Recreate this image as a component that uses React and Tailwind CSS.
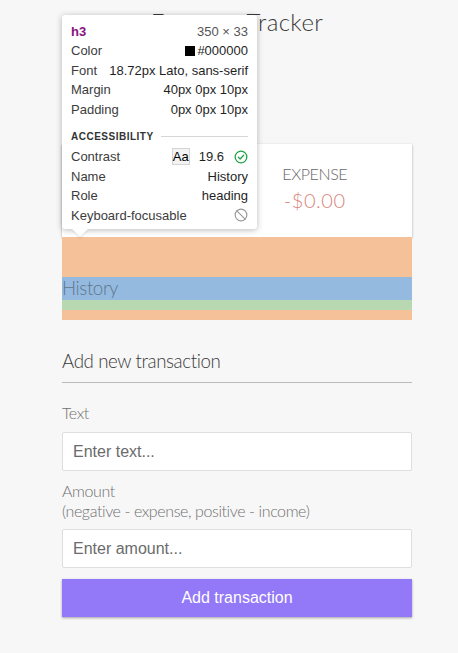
import React from 'react';

const TipRow = ( { label, children, className = '' } ) => (
	<div className={ `flex items-center justify-between h-[19.5px] ${ className }` }>
		<span className="text-[#3c3c3c]">{ label }</span>
		<span className="flex items-center text-[#1f1f1f]">{ children }</span>
	</div>
);

const Inspector = () => (
	<div className="absolute left-[62px] top-[15px] w-[195px] h-[214px] bg-white rounded-[3px] shadow-[0_1px_6px_rgba(0,0,0,0.28)] px-[9px] pt-[6.5px] font-['Liberation_Sans',Arial,sans-serif] font-normal tracking-normal text-[13px]">
		<div className="flex items-center justify-between h-[19.5px]">
			<span className="font-bold text-[#881280]">h3</span>
			<span className="text-[#555]">350 × 33</span>
		</div>
		<TipRow label="Color">
			<span className="w-[10px] h-[10px] bg-black mr-[2px]" />
			#000000
		</TipRow>
		<TipRow label="Font">18.72px Lato, sans-serif</TipRow>
		<TipRow label="Margin">40px 0px 10px</TipRow>
		<TipRow label="Padding">0px 0px 10px</TipRow>
		<div className="flex items-center gap-[7px] h-[14px] mt-[10px] mb-[4px]">
			<span className="text-[10px] font-bold tracking-[0.5px] text-[#333]">ACCESSIBILITY</span>
			<span className="flex-1 h-px bg-[#d6d6d6]" />
		</div>
		<TipRow label="Contrast">
			<span className="inline-flex items-center justify-center w-[18px] h-[17px] border border-[#d4d4d4] bg-[#f3f3f3] text-black text-[13px] mr-[9px]">
				Aa
			</span>
			<span className="mr-[10px]">19.6</span>
			<svg width="14" height="14" viewBox="0 0 24 24" fill="none" stroke="#1ea446" strokeWidth="2.2" strokeLinecap="round" strokeLinejoin="round">
				<circle cx="12" cy="12" r="10" />
				<path d="m7.5 12.5 3 3 6-6.5" />
			</svg>
		</TipRow>
		<TipRow label="Name">History</TipRow>
		<TipRow label="Role">heading</TipRow>
		<TipRow label="Keyboard-focusable">
			<svg width="14" height="14" viewBox="0 0 24 24" fill="none" stroke="#9a9a9a" strokeWidth="2" strokeLinecap="round">
				<circle cx="12" cy="12" r="10" />
				<path d="m4.9 4.9 14.2 14.2" />
			</svg>
		</TipRow>
		<div className="absolute left-[10px] top-full w-0 h-0 border-l-[8px] border-r-[8px] border-t-[8px] border-l-transparent border-r-transparent border-t-white drop-shadow-[0_1px_1px_rgba(0,0,0,0.12)]" />
	</div>
);

const App = () => {
	return (
		<div className="relative min-h-screen bg-[#f7f7f7] font-['Lato',sans-serif] text-[#4a4a4a] font-light tracking-[-0.025em]">
			<div className="w-[350px] ml-[62px] pt-[7.6px] pb-[30px]">
				<h2 className="text-[24px] leading-[28.8px] tracking-[0.4px] text-center text-[#3a3a3a]">
					Expense Tracker
				</h2>
				<h4 className="mt-[30px] text-[16px] leading-[19.2px] uppercase">Your Balance</h4>
				<h1 className="text-[32px] leading-[38.4px] tracking-[0.2px]">$0.00</h1>

				<div className="mt-[20px] bg-white p-5 flex shadow-[0_1px_3px_rgba(0,0,0,0.12),0_1px_2px_rgba(0,0,0,0.24)]">
					<div className="flex-1 text-center border-r border-[#dedede]">
						<h4 className="text-[16px] leading-[19.2px] uppercase text-[#666]">Income</h4>
						<p className="my-[5px] text-[20px] leading-[24px] tracking-[0.6px] text-[#5fd08d]">+$0.00</p>
					</div>
					<div className="flex-1 text-center">
						<h4 className="text-[16px] leading-[19.2px] uppercase text-[#666]">Expense</h4>
						<p className="my-[5px] text-[20px] leading-[24px] tracking-[0.6px] text-[#d9857c]">-$0.00</p>
					</div>
				</div>

				<div className="bg-[#f5c199] pt-[40px] pb-[10px]">
					<div className="bg-[#b8d8b1] pb-[10px]">
						<h3 className="bg-[#94badf] text-[18.72px] leading-[22.5px] text-[#61768c]">History</h3>
					</div>
				</div>
				<ul className="list-none p-0 m-0" />

				<h3 className="mt-[30px] text-[18.72px] leading-[22.5px] pb-[10px] border-b border-[#bbb] text-[#3a3a3a]">
					Add new transaction
				</h3>
				<form onSubmit={ ( e ) => e.preventDefault() }>
					<label className="block mt-[19.5px] mb-[10.5px] text-[16px] leading-[19.2px] text-[#707070]">Text</label>
					<input
						type="text"
						placeholder="Enter text..."
						className="block w-full h-[39px] bg-white border border-[#dedede] rounded-[2px] px-[10px] text-[16px] tracking-normal font-normal font-['Liberation_Sans',Arial,sans-serif] placeholder:text-[#6b6b6b] outline-none"
					/>
					<label className="block mt-[10px] mb-[9.5px] text-[16px] leading-[19.2px] text-[#707070]">
						Amount
						<br />
						(negative - expense, positive - income)
					</label>
					<input
						type="number"
						placeholder="Enter amount..."
						className="block w-full h-[39px] bg-white border border-[#dedede] rounded-[2px] px-[10px] text-[16px] tracking-normal font-normal font-['Liberation_Sans',Arial,sans-serif] placeholder:text-[#6b6b6b] outline-none"
					/>
					<button className="block w-full h-[38px] mt-[11px] bg-[#9378f7] text-white text-[16px] tracking-normal font-normal font-['Liberation_Sans',Arial,sans-serif] shadow-[0_1px_3px_rgba(0,0,0,0.12),0_1px_2px_rgba(0,0,0,0.24)]">
						Add transaction
					</button>
				</form>
			</div>
			<Inspector />
		</div>
	);
};

export default App;
